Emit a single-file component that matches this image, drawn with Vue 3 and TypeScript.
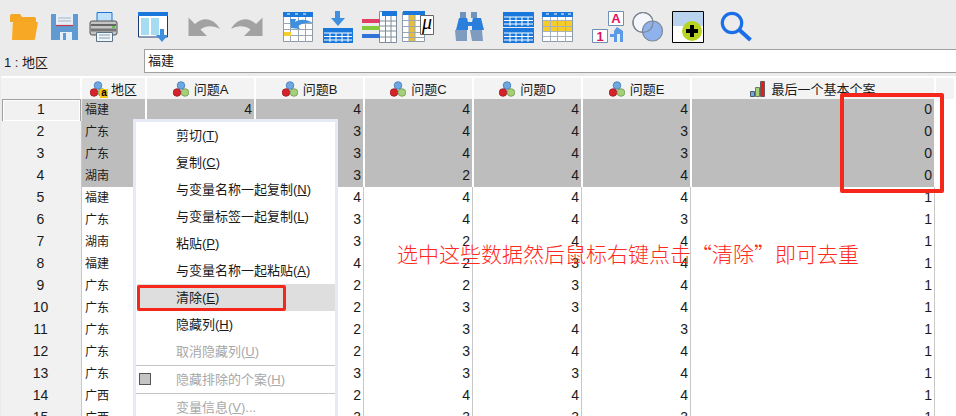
<script setup lang="ts">
interface MenuItem {
  label: string
  key?: string
  suffix?: string
  disabled?: boolean
  active?: boolean
  check?: boolean
  line?: boolean
}

const columns = ['问题A', '问题B', '问题C', '问题D', '问题E']

const region = ['福建', '广东', '广东', '湖南', '福建', '广东', '湖南', '福建', '广东', '广东', '广东', '广东', '广东', '广西', '广西']
// 问题A 除第一行外都被右键菜单盖住
const b = [4, 3, 3, 3, 4, 3, 3, 4, 2, 2, 2, 2, 3, 2, 3]
const c = [4, 4, 4, 2, 4, 4, 2, 2, 2, 3, 3, 3, 3, 4, 3]
const d = [4, 4, 4, 4, 4, 4, 4, 3, 3, 3, 4, 4, 3, 4, 3]
const e = [4, 3, 3, 4, 4, 3, 4, 4, 4, 4, 3, 4, 4, 4, 3]

const rows = region.map((name, i) => ({
  no: i + 1,
  name,
  values: [i === 0 ? 4 : '', b[i], c[i], d[i], e[i]],
  last: i < 4 ? 0 : 1,
  selected: i < 4,
}))

const menu: MenuItem[] = [
  { label: '剪切', key: 'T' },
  { label: '复制', key: 'C' },
  { label: '与变量名称一起复制', key: 'N' },
  { label: '与变量标签一起复制', key: 'L' },
  { label: '粘贴', key: 'P' },
  { label: '与变量名称一起粘贴', key: 'A' },
  { label: '清除', key: 'E', active: true },
  { label: '隐藏列', key: 'H' },
  { label: '取消隐藏列', key: 'U', disabled: true, line: true },
  { label: '隐藏排除的个案', key: 'H', disabled: true, check: true, line: true },
  { label: '变量信息', key: 'V', suffix: '...', disabled: true },
]
</script>

<template>
  <div class="app">
    <svg class="defs" width="0" height="0">
      <symbol id="balls" viewBox="0 0 16 16">
        <circle cx="8" cy="4.500" r="3.800" fill="#6fa8e0" stroke="#3f78b8" stroke-width="0.800" />
        <circle cx="4" cy="11.500" r="3.800" fill="#d8222a" stroke="#9c1a20" stroke-width="0.800" />
        <circle cx="12" cy="11.500" r="3.800" fill="#a5cf78" stroke="#6f9a4a" stroke-width="0.800" />
      </symbol>
    </svg>

    <div class="toolbar">
      <!-- 打开 -->
      <svg viewBox="8 10 36 34" width="36" height="34">
        <path d="M10 16q0-2 2-2h8l2 3h12q2 0 2 2v3H10z" fill="#f5a623" />
        <path d="M11 23h26l-3 17H12z" fill="#fbe3b5" />
        <path d="M13 22h25l-3 17q0 1-2 1H12z" fill="#f7a925" />
      </svg>
      <!-- 保存 -->
      <svg viewBox="49 10 36 34" width="36" height="34">
        <path d="M51 14h27v26H51z" fill="#5f9bd1" />
        <path d="M56 14h17v11H56z" fill="#e8eef5" />
        <path d="M56 25.500h17" stroke="#c43a4a" stroke-width="1.200" />
        <path d="M58 18h13M58 21h13" stroke="#a9b4c0" />
        <path d="M60 32h12v8H60z" fill="#e6f0fa" />
        <path d="M63 33h3v7h-3z" fill="#5f9bd1" />
      </svg>
      <!-- 打印 -->
      <svg viewBox="88 10 36 34" width="36" height="34">
        <path d="M97 12.500h15v10H97z" fill="#bfe2fa" stroke="#1a76d2" />
        <path d="M92 21h23q2 0 2 2v10q0 2-2 2H92q-2 0-2-2V23q0-2 2-2z" fill="#c4c4c4" stroke="#555" />
        <path d="M91 25h25" stroke="#666" stroke-width="2" />
        <path d="M91 30h25" stroke="#777" stroke-width="3" />
        <path d="M112 26h3v2h-3z" fill="#5cc04a" />
        <path d="M96.500 32.500h16v9h-16z" fill="#eef6fc" stroke="#5e7286" />
        <path d="M99 35h11M99 38h11" stroke="#8a9aaa" />
      </svg>
      <!-- 转到 -->
      <svg viewBox="137 10 36 34" width="36" height="34">
        <path d="M138.500 14h29v23h-29z" fill="#fff" stroke="#1d3a78" />
        <path d="M138 12h30v4h-30z" fill="#1a78dc" />
        <path d="M141 18h8v17h-8zM151 18h8v17h-8z" fill="#a5dcf2" />
        <path d="M160 29h4v6h4l-6 7-6-7h4z" fill="#3f8fe0" />
      </svg>
      <!-- 撤销 -->
      <svg viewBox="188 10 36 34" width="36" height="34">
        <path d="M188.500 17.500L195 24C203 16 214 18 220 29C213 25 206 25.500 200.500 29.500L207 36H188.500Z" fill="#a2a2a2" />
      </svg>
      <!-- 恢复 -->
      <svg viewBox="231 10 36 34" width="36" height="34">
        <path d="M262.500 17.500L256 24C248 16 237 18 231 29C238 25 245 25.500 250.500 29.500L244 36H262.500Z" fill="#a2a2a2" />
      </svg>
      <!-- 转到个案 -->
      <svg viewBox="282 10 36 34" width="36" height="34">
        <path d="M283.500 12.500h29v29h-29z" fill="#fff" stroke="#8c9aaa" />
        <path d="M283 12h30v5h-30z" fill="#1a78dc" />
        <path d="M287 14h3M295 14h3M303 14h3" stroke="#fff" />
        <path d="M283 23.500h30M283 29.500h30M283 35.500h30M290.500 17v25M298.500 17v25M305.500 17v25" stroke="#9aa6b2" />
        <path d="M284 32h7v4h-7z" fill="#f4cf2d" />
        <path d="M290 19h6l-1 3c5-3 11-3 18 1-6-1-11 0-15 3l2 3-9-1z" fill="#3d8fe0" />
      </svg>
      <!-- 转到变量 -->
      <svg viewBox="322 10 36 34" width="36" height="34">
        <path d="M335 11h5v7h5l-7 8-7-8h4z" fill="#3f8fe0" />
        <path d="M323 28h30v15h-30z" fill="#1a78dc" />
        <path d="M324 33h28M324 36.500h28M324 40h28M330 33v9M336 33v9M342 33v9M348 33v9" stroke="#fff" />
      </svg>
      <!-- 变量 -->
      <svg viewBox="362 10 36 34" width="36" height="34">
        <path d="M379.500 11.500h17v31h-17z" fill="#fff" stroke="#7c8c9c" />
        <path d="M382 11h15v5h-15z" fill="#1a78dc" />
        <path d="M380 21h17M380 26h17M380 31h17M380 37h17M385.500 16v26M391 16v26" stroke="#7c8c9c" />
        <path d="M362 19h18v4h-18z" fill="#e23f66" />
        <path d="M362 26h18v4h-18z" fill="#82c93c" />
        <path d="M362 34h18v4h-18z" fill="#2f74d6" />
      </svg>
      <!-- 描述统计 -->
      <svg viewBox="402 10 36 34" width="36" height="34">
        <path d="M402.500 12.500h22v29h-22z" fill="#fff" stroke="#8c9aaa" />
        <path d="M403 11h22v4h-22z" fill="#1a78dc" />
        <path d="M409 15h6v26h-6z" fill="#e8bd3a" />
        <path d="M403 20.500h22M403 26.500h22M403 32.500h22M403 37.500h22M409 15v27M415 15v27" stroke="#9aa6b2" />
        <path d="M420.500 15.500h13v19h-13z" fill="#fff" stroke="#666" />
        <text class="mu" x="427" y="29">μ</text>
      </svg>
      <!-- 查找 -->
      <svg viewBox="452 10 36 34" width="36" height="34">
        <path d="M460 12h6v6h-6zM471 12h6v6h-6z" fill="#6f93bd" />
        <path d="M459 18h8l1 4h4l1-4h8l3 12h-12v-4h-4v4h-12z" fill="#2a7fdc" />
        <path d="M455 30h12v11h-11zM470 30h12l1 11h-11z" fill="#7f9cc0" />
      </svg>
      <!-- 拆分 -->
      <svg viewBox="503 10 36 34" width="36" height="34">
        <path d="M503 12h31v15h-31zM503 28h31v15h-31z" fill="#1a78dc" />
        <path d="M504 17h29M504 20.500h29M504 24h29M504 33h29M504 36.500h29M504 40h29M510 17v9M516 17v9M522 17v9M528 17v9M510 33v9M516 33v9M522 33v9M528 33v9" stroke="#fff" />
      </svg>
      <!-- 选择个案 -->
      <svg viewBox="541 10 36 34" width="36" height="34">
        <path d="M542.500 12.500h30v29h-30z" fill="#fff" stroke="#8c9aaa" />
        <path d="M542 12h31v5h-31z" fill="#1a78dc" />
        <path d="M546 14h3M554 14h3M561 14h3M568 14h3" stroke="#fff" />
        <path d="M543 21h29v5h-29zM543 27h29v4h-29z" fill="#f5cc2a" />
        <path d="M543 20.500h29M543 26.500h29M543 31.500h29M543 36.500h29M550.500 17v25M557.500 17v25M565.500 17v25" stroke="#a8b2bc" />
      </svg>
      <!-- 值标签 -->
      <svg viewBox="592 10 36 34" width="36" height="34">
        <path d="M608.500 11.500h15v14h-15z" fill="#fff" stroke="#6f8fb4" />
        <text class="tag" x="616" y="23">A</text>
        <path d="M592.500 29.500h15v13h-15z" fill="#fff" stroke="#6f8fb4" />
        <text class="tag" x="600" y="41">1</text>
        <path d="M617 27l-3 4v3l-4 0v3l4 0v5h3v-8l3 0v8h3V31z" fill="#5a9ae6" />
      </svg>
      <!-- 使用变量集 -->
      <svg viewBox="632 10 36 34" width="36" height="34">
        <circle cx="643" cy="22.500" r="10" fill="#f4f6fb" stroke="#7d8794" stroke-width="1.200" />
        <circle cx="652.500" cy="31" r="10" fill="#8fb2ec" stroke="#7d8794" stroke-width="1.200" />
        <circle cx="643" cy="22.500" r="10" fill="none" stroke="#7d8794" stroke-width="1.200" />
      </svg>
      <!-- 拟合线 -->
      <svg viewBox="672 10 36 34" width="36" height="34">
        <path d="M672.500 11.500h31v31h-31z" fill="#fff" stroke="#000" />
        <path d="M673 12h30v14h-30z" fill="#b9d3ef" />
        <circle cx="692" cy="31" r="10" fill="#b8d321" />
        <path d="M690 25h4v4h4v4h-4v4h-4v-4h-4v-4h4z" fill="#000" />
      </svg>
      <!-- 搜索 -->
      <svg viewBox="720 10 36 34" width="36" height="34">
        <circle cx="732" cy="23" r="9.700" fill="none" stroke="#1a6fe8" stroke-width="3.200" />
        <path d="M739.500 30l11 10" stroke="#1a6fe8" stroke-width="4" />
      </svg>
    </div>

    <div class="formula">
      <span class="cell-name">1 : 地区</span>
      <div class="cell-value">福建</div>
    </div>

    <div class="sheet">
      <div class="row head">
        <div class="hc"></div>
        <div class="hc">
          <span class="ball-wrap">
            <svg width="16" height="16"><use href="#balls" /></svg>
            <span class="a-badge">a</span>
          </span>
          地区
        </div>
        <div v-for="col in columns" :key="col" class="hc">
          <svg width="16" height="16"><use href="#balls" /></svg>
          {{ col }}
        </div>
        <div class="hc">
          <svg width="16" height="16" viewBox="0 0 16 16">
            <path d="M.5 10.500h4v5h-4z" fill="#6fa8e0" stroke="#4a5a6a" />
            <path d="M5.500 6.500h4v9h-4z" fill="#a5cf78" stroke="#6a7a5a" />
            <path d="M10.500 .5h4v15h-4z" fill="#e0201e" stroke="#6a5a5a" />
          </svg>
          最后一个基本个案
        </div>
        <div class="hc"></div>
      </div>

      <div v-for="r in rows" :key="r.no" class="row" :class="{ sel: r.selected }">
        <div class="no" :class="{ cur: r.no === 1 }">{{ r.no }}</div>
        <div class="c name">{{ r.name }}</div>
        <div v-for="(v, i) in r.values" :key="i" class="c num">{{ v }}</div>
        <div class="c num">{{ r.last }}</div>
        <div class="c rest"></div>
      </div>
    </div>

    <ul class="menu">
      <li
        v-for="item in menu"
        :key="item.label"
        :class="{ disabled: item.disabled, active: item.active, line: item.line }"
      >
        <span v-if="item.check" class="check"></span>
        {{ item.label }}(<u>{{ item.key }}</u>){{ item.suffix }}
      </li>
    </ul>

    <div class="mark mark-data"></div>
    <div class="mark mark-clear"></div>
    <div class="note">选中这些数据然后鼠标右键点击“清除”即可去重</div>
  </div>
</template>

<style>
body {
  margin: 0;
}
</style>

<style scoped>
.app {
  position: relative;
  width: 956px;
  height: 416px;
  overflow: hidden;
  background: #ebebeb;
  color: #1a1a1a;
  font-family: "Liberation Sans", "Noto Sans CJK SC", sans-serif;
  font-size: 13px;
}

.defs {
  position: absolute;
}

.toolbar {
  display: grid;
  grid-template-columns: 41px 39px 49px 51px 43px 51px 40px 40px 40px 50px 51px 38px 51px 40px 40px 48px 36px;
  height: 39px;
  padding: 10px 0 0 8px;
}

.mu {
  font-family: "Liberation Serif", serif;
  font-size: 20px;
  font-style: italic;
  text-anchor: middle;
  fill: #000;
}

.tag {
  font-size: 13px;
  font-weight: 700;
  text-anchor: middle;
  fill: #e0115f;
}

.formula {
  display: flex;
  align-items: center;
  height: 24px;
}

.cell-name {
  width: 144px;
  padding-left: 4px;
  box-sizing: border-box;
}

.cell-value {
  flex: 1;
  height: 24px;
  box-sizing: border-box;
  padding-left: 3px;
  line-height: 22px;
  background: #fff;
  border: solid #a0a0a0;
  border-width: 1px 0 1px 1px;
}

.sheet {
  margin-top: 3px;
  padding-left: 1px;
}

.row {
  display: grid;
  grid-template-columns: 81px 65px repeat(5, 109px) 244px 20px;
  height: 22px;
}

.head {
  height: 23px;
}

.hc {
  display: flex;
  align-items: center;
  justify-content: center;
  gap: 5px;
  box-sizing: border-box;
  background: #f3f3f3;
  border-top: 2px solid #fff;
  border-right: 2px solid #fff;
  white-space: nowrap;
}

.ball-wrap {
  position: relative;
  display: flex;
}

.a-badge {
  position: absolute;
  right: -2px;
  bottom: -1px;
  width: 8px;
  height: 9px;
  background: #f5c518;
  font-size: 10px;
  font-weight: 700;
  line-height: 8px;
  text-align: center;
  color: #000;
}

.no {
  box-sizing: border-box;
  padding-right: 1px;
  background: #f1f1f1;
  border-bottom: 1px solid #c8c8c8;
  border-right: 1px solid #c8c8c8;
  font-size: 14px;
  line-height: 21px;
  text-align: center;
}

.no.cur {
  margin: 0 1px 1px;
  border: 1px solid #a0a0a0;
  box-shadow: inset 0 0 0 1px #fff;
  line-height: 19px;
}

.c {
  box-sizing: border-box;
  padding: 0 4px 0 3px;
  background: #fff;
  border-bottom: 1px solid #c8c8c8;
  box-shadow: inset -1px 0 #fff, inset -2px 0 #c8c8c8;
  line-height: 21px;
}

.name {
  font-size: 12px;
  line-height: 23px;
}

.num {
  font-size: 14px;
  text-align: right;
}

.sel .c {
  background: #bdbdbd;
  border-bottom-color: #d2d2d2;
  box-shadow: inset -2px 0 #fff;
}

.sel .c.rest {
  background: #fff;
  border-bottom-color: #c8c8c8;
  box-shadow: none;
}

.rest {
  box-shadow: none;
}

.menu {
  position: absolute;
  top: 119px;
  left: 133px;
  width: 205px;
  height: 310px;
  box-sizing: border-box;
  margin: 0;
  padding: 0;
  list-style: none;
  background: #fff;
  border: 3px solid #e6e9f6;
}

.menu li {
  position: relative;
  box-sizing: border-box;
  height: 27px;
  padding-left: 40px;
  line-height: 27px;
  white-space: nowrap;
}

.menu li.active {
  margin-left: 1px;
  padding-left: 39px;
  background: #dedede;
}

.menu li.disabled {
  color: #a8a8a8;
}

.menu li.line {
  height: 28px;
  border-bottom: 1px solid #c4c4c4;
}

.check {
  position: absolute;
  top: 7px;
  left: 3px;
  width: 10px;
  height: 10px;
  background: #c4c4c4;
  border: 1px solid #555;
}

.mark {
  position: absolute;
  box-sizing: border-box;
  border: 3px solid #f5261a;
  border-radius: 2px;
}

.mark-data {
  top: 93px;
  left: 840px;
  width: 104px;
  height: 100px;
  border-width: 4px;
}

.mark-clear {
  top: 285px;
  left: 137px;
  width: 149px;
  height: 26px;
}

.note {
  position: absolute;
  top: 239px;
  left: 397px;
  font-family: "Noto Sans CJK SC", sans-serif;
  font-size: 21px;
  font-weight: 300;
  line-height: 28px;
  color: #ff2a1e;
  white-space: nowrap;
}
</style>
